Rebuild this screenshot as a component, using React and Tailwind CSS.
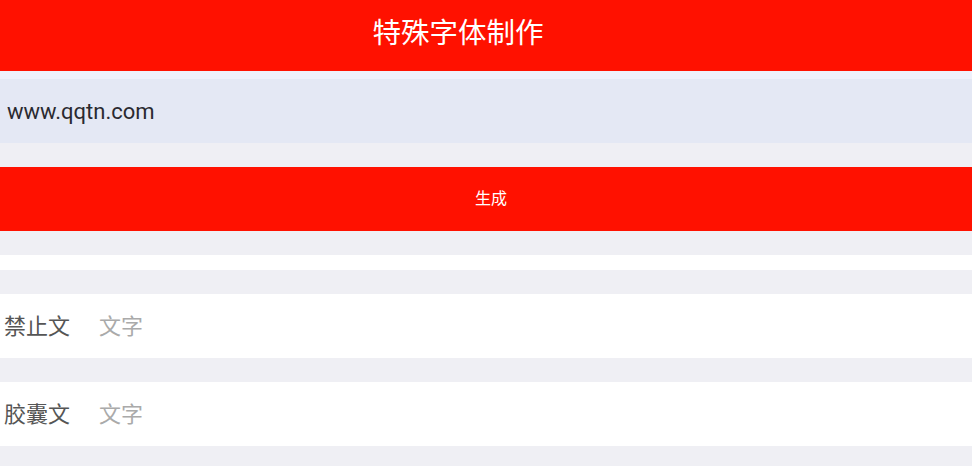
export default function App() {
  const rows = [
    { label: "禁止文", ph: "文字" },
    { label: "胶囊文", ph: "文字" },
  ];
  return (
    <div
      className="w-full h-[466px] overflow-hidden bg-[#efeff4]"
      style={{ fontFamily: 'Roboto, "Noto Sans CJK SC", sans-serif' }}
    >
      {/* Header */}
      <div className="h-[71px] bg-[#ff1100] flex items-center justify-center pr-[56px] pb-[2px]">
        <h1 className="text-white text-[28.5px] font-normal leading-none">特殊字体制作</h1>
      </div>

      {/* Input */}
      <div className="h-[8px] bg-[#eef0fa]" />
      <div className="h-[64px] bg-[#e4e8f4] flex items-center pl-[7px]">
        <input
          defaultValue="www.qqtn.com"
          className="w-full bg-transparent outline-none text-[22px] text-[#2a2a30]"
        />
      </div>

      <div className="h-[24px]" />
      <button className="w-full h-[64px] bg-[#ff1100] text-white text-[16px] flex items-center justify-center pl-[10px]">
        生成
      </button>

      <div className="h-[24px]" />
      <div className="h-[15px] bg-white" />

      {rows.map((r) => (
        <div key={r.label}>
          <div className="h-[24px]" />
          <div className="h-[64px] bg-white flex items-center pl-[4px] text-[22px]">
            <span className="text-[#555] w-[95px]">{r.label}</span>
            <span className="text-[#aaa]">{r.ph}</span>
          </div>
        </div>
      ))}
    </div>
  );
}
